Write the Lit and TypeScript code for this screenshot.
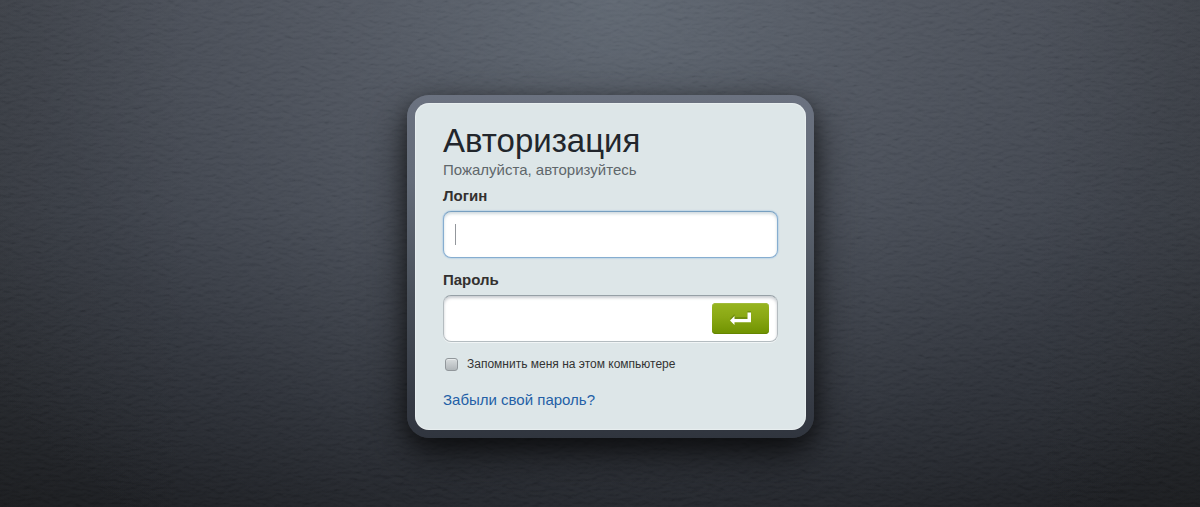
import { LitElement, html, css } from "lit";
import { customElement } from "lit/decorators.js";

@customElement("app-root")
export class AppRoot extends LitElement {
  static styles = css`
    :host {
      display: block;
      position: relative;
      isolation: isolate;
      overflow: hidden;
      box-sizing: border-box;
      min-height: 100vh;
      padding: 95px 0 68px 21px;
      font-family: "Liberation Sans", Arial, sans-serif;
      font-size: 15px;
      color: #333;
      background:
        radial-gradient(ellipse 64% 130% at 51% 0, rgba(112, 122, 134, 0.62) 0%, rgba(98, 105, 117, 0.46) 35%, rgba(70, 76, 88, 0.22) 75%, transparent 100%),
        linear-gradient(90deg, rgba(20, 20, 16, 0.16), transparent 16%, transparent 86%, rgba(20, 20, 16, 0.16)),
        linear-gradient(#43474f 0%, #393d45 42%, #272a30 78%, #1c1e22 100%);
    }
    .leather {
      position: absolute;
      inset: 0;
      width: 100%;
      height: 100%;
      z-index: -1;
      opacity: 0.11;
      mix-blend-mode: soft-light;
    }
    .card {
      box-sizing: border-box;
      width: 407px;
      max-width: 100%;
      margin: 0 auto;
      padding: 8px;
      border-radius: 22px;
      background: linear-gradient(#6b7280, #646c79 25%, #484f59 60%, #353a44 90%, #30353e);
      box-shadow: 0 16px 44px rgba(0, 0, 0, 0.65), 0 8px 20px rgba(0, 0, 0, 0.4);
    }
    .form {
      display: flex;
      flex-direction: column;
      padding: 19px 28px 20px;
      border-radius: 14px;
      background: #dde6e8;
      box-shadow: inset 0 0 1px 1px rgba(255, 255, 255, 0.35);
    }
    .title {
      margin: 0;
      font-size: 33px;
      line-height: 38px;
      font-weight: 400;
      color: #22262c;
    }
    .hint {
      margin: 0;
      line-height: 20px;
      color: #5f676b;
    }
    .label {
      margin-top: 6px;
      line-height: 20px;
      font-weight: 700;
      color: #33302f;
    }
    .field {
      display: flex;
      align-items: center;
      box-sizing: border-box;
      height: 47px;
      margin: 5px 0 6px;
      padding: 0 8px 0 11px;
      border: 1px solid #b4bcc0;
      border-top-color: #96a0a6;
      border-radius: 8px;
      background: #fff;
      box-shadow: inset 0 2px 3px rgba(120, 130, 140, 0.4), 0 1px 0 rgba(255, 255, 255, 0.6);
    }
    .field.active {
      border-color: #86add0;
      border-top-color: #779fc0;
      box-shadow: inset 0 2px 3px rgba(120, 150, 160, 0.35), 0 0 1px 1px rgba(150, 190, 225, 0.35);
    }
    .input {
      flex: 1;
      min-width: 0;
      height: 21px;
      padding: 0;
      border: 0;
      outline: 0;
      background: transparent;
      font: inherit;
    }
    .active .input {
      background: linear-gradient(#93979c, #93979c) left / 1px 100% no-repeat;
    }
    .submit {
      display: flex;
      align-items: center;
      justify-content: center;
      width: 57px;
      height: 31px;
      padding: 0;
      border: 0;
      border-radius: 4px;
      background: linear-gradient(#97b51f, #8aa814 45%, #6f9200);
      box-shadow: inset 0 -1px 0 #658500, inset 0 1px 0 #a1bb3a;
      cursor: pointer;
    }
    .remember {
      display: flex;
      align-items: center;
      gap: 9px;
      margin-top: 6px;
      padding-left: 2px;
      line-height: 20px;
      font-size: 12px;
    }
    .check {
      appearance: none;
      width: 13px;
      height: 13px;
      margin: 0;
      border: 1px solid #91979b;
      border-radius: 3px;
      background: linear-gradient(#d8dcde, #b0b6b9);
      box-shadow: inset 0 1px 0 #e6eaeb;
    }
    .check:checked {
      background: #4f7f9f;
    }
    .forgot {
      align-self: flex-start;
      margin-top: 16px;
      line-height: 20px;
      color: #235fa6;
      text-decoration: none;
    }
  `;

  render() {
    return html`
      <svg class="leather" aria-hidden="true">
        <filter id="grain" x="0" y="0" width="100%" height="100%">
          <feTurbulence type="fractalNoise" baseFrequency="0.12 0.26" numOctaves="3" seed="4" result="n" />
          <feDiffuseLighting in="n" surfaceScale="2" diffuseConstant="0.8" lighting-color="#fff">
            <feDistantLight azimuth="265" elevation="40" />
          </feDiffuseLighting>
        </filter>
        <rect width="100%" height="100%" filter="url(#grain)" />
      </svg>
      <main class="card">
        <form class="form" @submit=${(e: Event) => e.preventDefault()}>
          <h1 class="title">Авторизация</h1>
          <p class="hint">Пожалуйста, авторизуйтесь</p>
          <label class="label" for="login">Логин</label>
          <div class="field active">
            <input class="input" id="login" type="text" autocomplete="username" />
          </div>
          <label class="label" for="password">Пароль</label>
          <div class="field">
            <input class="input" id="password" type="password" autocomplete="current-password" />
            <button class="submit" type="submit" aria-label="Войти">
              <svg width="21" height="15" viewBox="0 0 21 15" aria-hidden="true">
                <path d="M0 8.5L4.5 4V7H17.5V1H21V11H4.5V14Z" fill="#5f7d08" opacity=".6" transform="translate(0 -0.9)" />
                <path d="M0 9.5L4.5 5V8H17.5V1.5H21V11.2H4.5V14Z" fill="#fff" />
              </svg>
            </button>
          </div>
          <div class="remember">
            <input class="check" id="remember" type="checkbox" />
            <label for="remember">Запомнить меня на этом компьютере</label>
          </div>
          <a class="forgot" href="#">Забыли свой пароль?</a>
        </form>
      </main>
    `;
  }
}
